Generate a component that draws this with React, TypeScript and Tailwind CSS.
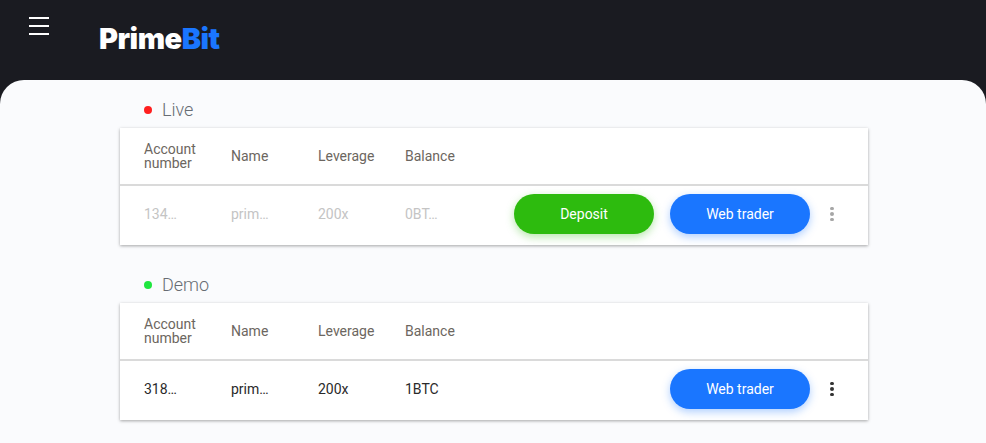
const roboto = "font-['Roboto',sans-serif]";

type Account = {
  number: string;
  name: string;
  leverage: string;
  balance: string;
};

function Menu() {
  return (
    <button className="flex flex-col gap-[6px] w-5 mt-[17px] ml-[29px] h-[18px]">
      <span className="block h-[2px] bg-white"></span>
      <span className="block h-[2px] bg-white"></span>
      <span className="block h-[2px] bg-white"></span>
    </button>
  );
}

function Cell({ text, muted }: { text: string; muted: boolean }) {
  return (
    <div className={`w-[87px] text-[14px] leading-[20px] ${muted ? 'text-[#c4c4c4]' : 'text-[#2a2a2a]'}`}>
      {text}
    </div>
  );
}

function Dots({ muted }: { muted: boolean }) {
  const color = muted ? 'bg-[#a6a6a6]' : 'bg-[#333333]';
  return (
    <div className="flex flex-col gap-[2px] ml-[20px] w-[4px]">
      <span className={`block w-[4px] h-[3.5px] rounded-full ${color}`}></span>
      <span className={`block w-[4px] h-[3.5px] rounded-full ${color}`}></span>
      <span className={`block w-[4px] h-[3.5px] rounded-full ${color}`}></span>
    </div>
  );
}

function AccountCard({ title, dot, account, muted }: { title: string; dot: string; account: Account; muted: boolean }) {
  return (
    <section>
      <div className="flex items-center h-[36px] pl-[24px] pb-[1px]">
        <span className={`block w-2 h-2 rounded-full mr-[10px] ${dot}`}></span>
        <span className="text-[18px] font-light text-[#676c73]">{title}</span>
      </div>
      <div className="bg-white h-[117px] shadow-[0_1px_3px_rgba(0,0,0,0.35)]">
        <div className="flex items-center h-[56px] pl-[24px] text-[14px] text-[#6c6660]">
          <div className="w-[87px] leading-[14px] pr-[20px]">Account number</div>
          <div className="w-[87px]">Name</div>
          <div className="w-[87px]">Leverage</div>
          <div className="w-[87px]">Balance</div>
        </div>
        <div className="h-[2px] bg-[#dadada]"></div>
        <div className="flex items-center h-[59px] pl-[24px] pb-[3px]">
          <Cell text={account.number} muted={muted} />
          <Cell text={account.name} muted={muted} />
          <Cell text={account.leverage} muted={muted} />
          <Cell text={account.balance} muted={muted} />
          <div className="flex items-center ml-auto pr-[34px]">
            {muted && (
              <button className="w-[140px] h-[40px] mr-[16px] rounded-[20px] bg-[#2dbb0e] text-white text-[14px] shadow-[0_3px_8px_rgba(45,187,14,0.35)]">
                Deposit
              </button>
            )}
            <button className="w-[140px] h-[40px] rounded-[20px] bg-[#1a76ff] text-white text-[14px] shadow-[0_3px_8px_rgba(26,118,255,0.35)]">
              Web trader
            </button>
            <Dots muted={muted} />
          </div>
        </div>
      </div>
    </section>
  );
}

export default function App() {
  return (
    <div className={`h-[443px] overflow-hidden bg-[#1a1b21] ${roboto}`}>
      <header className="flex h-[80px]">
        <Menu />
        <div className="ml-[50px] mt-[21px] text-[29px] leading-[36px] font-black tracking-[-0.5px] text-white font-['Inter',sans-serif]">
          Prime<span className="text-[#1a76ff]">Bit</span>
        </div>
      </header>
      <main className="h-[363px] rounded-t-[24px] bg-[#fafbfd] pt-[12px]">
        <div className="w-[748px] ml-[120px] flex flex-col gap-[22px]">
          <AccountCard
            title="Live"
            dot="bg-[#ff1f1f]"
            muted={true}
            account={{ number: '134…', name: 'prim…', leverage: '200x', balance: '0BT…' }}
          />
          <AccountCard
            title="Demo"
            dot="bg-[#1fe63f]"
            muted={false}
            account={{ number: '318…', name: 'prim…', leverage: '200x', balance: '1BTC' }}
          />
        </div>
      </main>
    </div>
  );
}
